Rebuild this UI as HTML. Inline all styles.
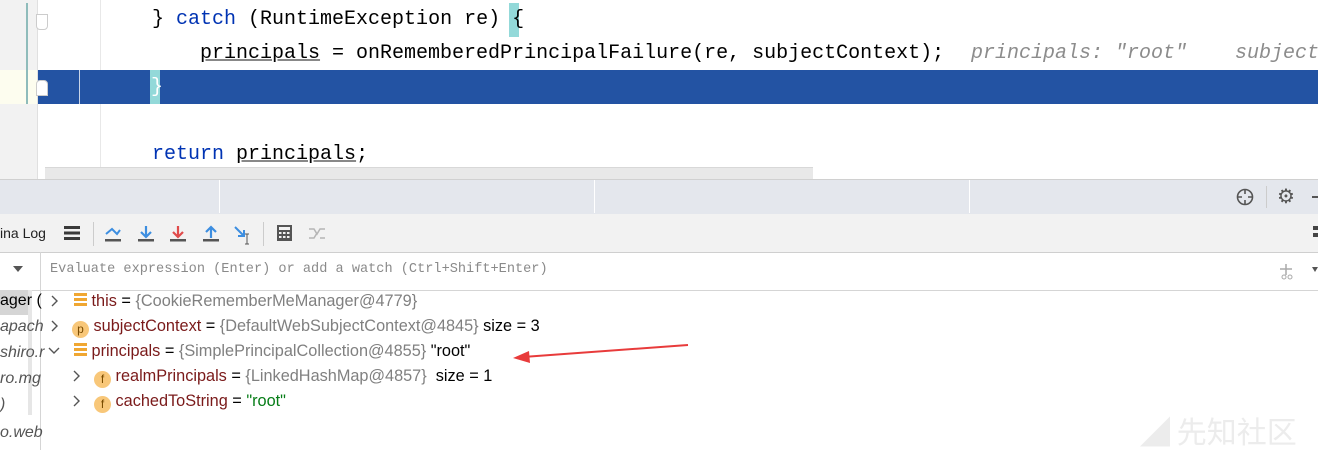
<!DOCTYPE html>
<html><head><style>
body{margin:0;width:1318px;height:450px;overflow:hidden;background:#fff;position:relative;font-family:"Liberation Sans",sans-serif}
.a{position:absolute}
.code{font-family:"Liberation Mono",monospace;font-size:20px;white-space:pre;color:#000}
.kw{color:#0033b3}
.u{text-decoration:underline;text-decoration-color:#888}
.v{font-size:16.3px;white-space:pre;color:#000;line-height:20px}
.n{color:#7a1a1a}
.g{color:#808080}
.ic{display:inline-block;width:17px;height:17px;border-radius:50%;background:#f8c779;color:#7a4b00;font-size:12px;text-align:center;line-height:17px;vertical-align:-2px}
.lines{display:inline-block;width:13px;height:14px;background:repeating-linear-gradient(#f0a732 0 3px,transparent 3px 5px);vertical-align:-1px}
.it{font-style:italic;color:#555;font-size:16px;white-space:pre}
</style></head><body>
<div class="a" style="left:0;top:0;width:37px;height:180px;background:#f2f2f2"></div>
<div class="a" style="left:0;top:70px;width:37px;height:34px;background:#fdfdef"></div>
<div class="a" style="left:26px;top:3px;width:2px;height:101px;background:#8fbcbb"></div>
<div class="a" style="left:37px;top:0;width:1px;height:180px;background:#e0e0e0"></div>
<div class="a" style="left:100px;top:0;width:1px;height:172px;background:#e8e8e8"></div>
<div class="a" style="left:38px;top:70px;width:1280px;height:34px;background:#2353a3"></div>
<div class="a" style="left:79px;top:70px;width:1px;height:34px;background:#c8d4e8"></div>
<div class="a" style="left:36px;top:14px;width:10px;height:14px;border:1px solid #ccc;background:#fff;border-radius:0 0 4px 4px"></div>
<div class="a" style="left:36px;top:80px;width:10px;height:14px;border:1px solid #ccc;background:#fff;border-radius:4px 4px 0 0"></div>
<div class="a" style="left:509px;top:3px;width:10px;height:34px;background:#93d9d9"></div>
<div class="a" style="left:150px;top:70px;width:10px;height:34px;background:#93d9d9"></div>
<div class="a code" style="left:152px;top:8px">} <span class="kw">catch</span> (RuntimeException re) {</div>
<div class="a code" style="left:200px;top:42px"><span class="u">principals</span> = onRememberedPrincipalFailure(re, subjectContext);</div>
<div class="a code" style="left:971px;top:42px;color:#8c8c8c;font-style:italic;font-size:20px">principals: "root"    subjectC</div>
<div class="a code" style="left:151px;top:76px;color:#fff">}</div>
<div class="a code" style="left:152px;top:143px"><span class="kw">return</span> <span class="u">principals</span>;</div>
<div class="a" style="left:45px;top:167px;width:768px;height:11px;background:#e8e8e8;border-top:1px solid #d8d8d8"></div>
<div class="a" style="left:0;top:179px;width:1318px;height:34px;background:#e4e7ed;border-top:1px solid #d0d0d0;border-bottom:1px solid #c9c9c9"></div>
<div class="a" style="left:219px;top:180px;width:1px;height:33px;background:#fff"></div>
<div class="a" style="left:594px;top:180px;width:1px;height:33px;background:#fff"></div>
<div class="a" style="left:969px;top:180px;width:1px;height:33px;background:#fff"></div>
<svg class="a" style="left:1236px;top:188px" width="20" height="20"><circle cx="9" cy="9" r="7.5" fill="none" stroke="#555" stroke-width="1.6"/><path d="M9 1v5M9 12v5M1 9h5M12 9h5" stroke="#555" stroke-width="1.6"/></svg>
<div class="a" style="left:1266px;top:186px;width:1px;height:22px;background:#ccc"></div>
<div class="a" style="left:1277px;top:184px;font-size:20px;color:#555">⚙</div>
<div class="a" style="left:1312px;top:196px;width:6px;height:2px;background:#555"></div>
<div class="a" style="left:0;top:214px;width:1318px;height:38px;background:#f2f2f2;border-bottom:1px solid #cfcfcf"></div>
<div class="a" style="left:0;top:225px;font-size:14px;color:#222">ina Log</div>
<div class="a" style="left:64px;top:226px;width:16px;height:14px;background:repeating-linear-gradient(#3a3a3a 0 3px,transparent 3px 5.5px)"></div>
<div class="a" style="left:93px;top:222px;width:1px;height:24px;background:#ccc"></div>
<svg class="a" style="left:104px;top:224px" width="150" height="22">
<path d="M2 10 L8 5 L13 10 L16 6" fill="none" stroke="#3d8ee0" stroke-width="2"/><rect x="1" y="15" width="16" height="2.5" fill="#555"/>
<path d="M42 2v11M37 8l5 5 5-5" fill="none" stroke="#3d8ee0" stroke-width="2.2"/><rect x="34" y="15" width="16" height="2.5" fill="#555"/>
<path d="M74 2v11M69 8l5 5 5-5" fill="none" stroke="#e04b4b" stroke-width="2.2"/><rect x="66" y="15" width="16" height="2.5" fill="#555"/>
<path d="M107 14V3M102 8l5-5 5 5" fill="none" stroke="#3d8ee0" stroke-width="2.2"/><rect x="99" y="15" width="16" height="2.5" fill="#555"/>
<path d="M131 3l9 9M134 12h6V6" fill="none" stroke="#3d8ee0" stroke-width="2"/><path d="M143 10v10M141 10h4M141 20h4" stroke="#555" stroke-width="1"/>
</svg>
<div class="a" style="left:263px;top:222px;width:1px;height:24px;background:#ccc"></div>
<svg class="a" style="left:276px;top:224px" width="60" height="20"><rect x="1" y="1" width="15" height="16" fill="#555"/><rect x="3" y="3" width="11" height="3" fill="#f2f2f2"/><g fill="#f2f2f2"><rect x="3" y="8" width="2.5" height="2"/><rect x="7" y="8" width="2.5" height="2"/><rect x="11" y="8" width="2.5" height="2"/><rect x="3" y="12" width="2.5" height="2"/><rect x="7" y="12" width="2.5" height="2"/><rect x="11" y="12" width="2.5" height="2"/></g>
<path d="M33 5h5l3 5 3-5h5M33 14h5l3-5M44 14h5" fill="none" stroke="#b5b5b5" stroke-width="1.5"/></svg>
<div class="a" style="left:1313px;top:226px;width:5px;height:14px;background:repeating-linear-gradient(#444 0 4px,transparent 4px 7px)"></div>
<div class="a" style="left:0;top:290px;width:1318px;height:1px;background:#d5d5d5"></div>
<div class="a" style="left:40px;top:252px;width:1px;height:198px;background:#d5d5d5"></div>
<div class="a" style="left:13px;top:266px;width:0;height:0;border-left:5px solid transparent;border-right:5px solid transparent;border-top:6px solid #555"></div>
<div class="a" style="left:50px;top:262px;font-family:'Liberation Mono',monospace;font-size:13.6px;color:#8a8a8a;white-space:pre">Evaluate expression (Enter) or add a watch (Ctrl+Shift+Enter)</div>
<svg class="a" style="left:1278px;top:263px" width="40" height="20"><path d="M8 1v11M2 6h12" stroke="#aaa" stroke-width="1.5"/><circle cx="6" cy="14" r="2" fill="none" stroke="#aaa"/><circle cx="12" cy="14" r="2" fill="none" stroke="#aaa"/><path d="M34 4l6 0-3 5z" fill="#555"/></svg>
<div class="a" style="left:0;top:290px;width:28px;height:25px;background:#d5d5d5"></div>
<div class="a" style="left:28px;top:290px;width:4px;height:125px;background:#e6e6e6"></div>
<div class="a" style="left:0;top:292px;font-size:16px;color:#000;white-space:pre">ager (</div>
<div class="a it" style="left:0;top:318px">apach</div>
<div class="a it" style="left:0;top:344px">shiro.r</div>
<div class="a it" style="left:0;top:370px">ro.mg</div>
<div class="a it" style="left:0;top:396px">)</div>
<div class="a it" style="left:0;top:424px">o.web</div>
<svg class="a" style="left:48px;top:294px" width="50" height="120" fill="none" stroke="#555" stroke-width="1.4">
<path d="M4 2l5 5-5 5"/><path d="M4 27l5 5-5 5"/><path d="M1 54l5 5 5-5"/><path d="M26 77l5 5-5 5"/><path d="M26 102l5 5-5 5"/></svg>
<div class="a v" style="left:74px;top:291px"><span class="lines"></span> <span class="n">this</span> = <span class="g">{CookieRememberMeManager@4779}</span></div>
<div class="a v" style="left:72px;top:316px"><span class="ic">p</span> <span class="n">subjectContext</span> = <span class="g">{DefaultWebSubjectContext@4845}</span> size = 3</div>
<div class="a v" style="left:74px;top:341px"><span class="lines"></span> <span class="n">principals</span> = <span class="g">{SimplePrincipalCollection@4855}</span> "root"</div>
<div class="a v" style="left:94px;top:366px"><span class="ic">f</span> <span class="n">realmPrincipals</span> = <span class="g">{LinkedHashMap@4857}</span>  size = 1</div>
<div class="a v" style="left:94px;top:391px"><span class="ic">f</span> <span class="n">cachedToString</span> = <span style="color:#067d17">"root"</span></div>
<svg class="a" style="left:505px;top:340px" width="190" height="25"><path d="M183 5L18 17" stroke="#e83b3b" stroke-width="2"/><path d="M8 18l16-7 1 12z" fill="#e83b3b"/></svg>
<div class="a" style="left:1140px;top:408px;font-size:30px;color:#ececec;font-family:'Noto Sans CJK SC',sans-serif;white-space:pre">◢ 先知社区</div>
</body></html>
